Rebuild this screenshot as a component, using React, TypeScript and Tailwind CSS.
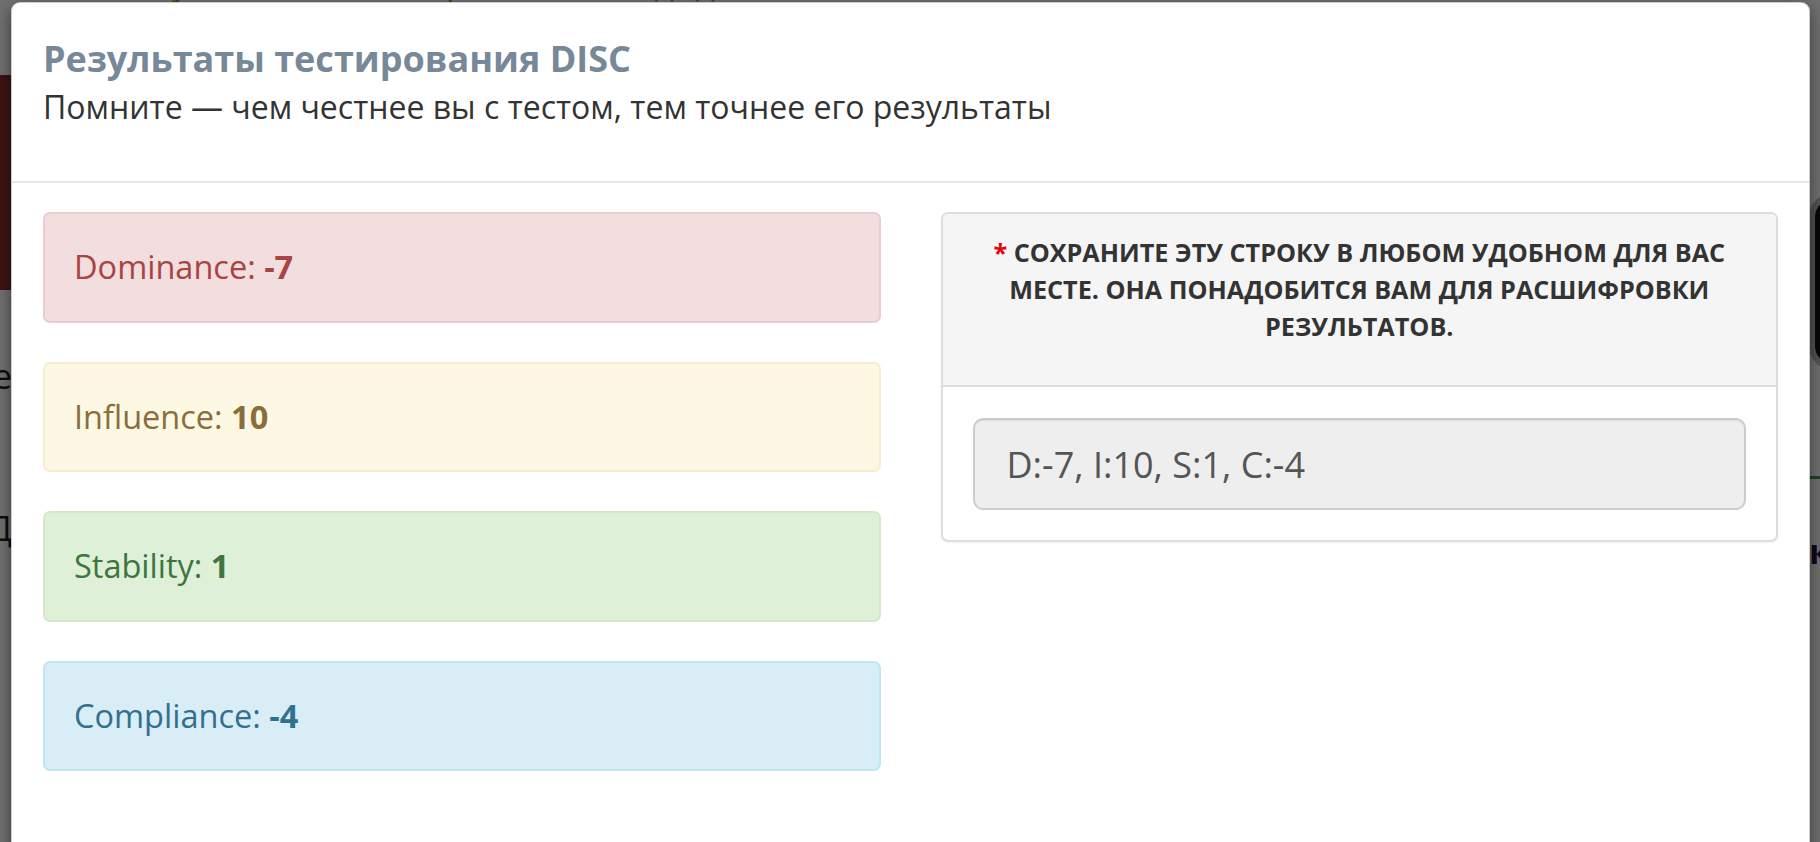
export default function App() {
  return (
    <div className="relative h-screen w-full overflow-hidden bg-white font-['Open_Sans',sans-serif]">
      {/* page behind the modal */}
      <div className="flex h-full">
        <div className="flex w-[12px] shrink-0 flex-col items-end">
          <div className="mt-[75px] h-[215px] w-[60px] shrink-0 bg-[#8a2f2f]" />
          <div className="mt-[66px] whitespace-nowrap text-[34px] leading-[40px] text-[#1c1c1c]">Резульнте</div>
          <div className="mt-[112px] whitespace-nowrap text-[34px] leading-[40px] text-[#1c1c1c]">ДД</div>
        </div>
        <div className="flex-1">
          <p className="mt-[-40px] pl-[139px] text-[34px] leading-[44px] text-[#d8862c]">публичного тестирования кандидатов.</p>
        </div>
        <div className="flex w-[11px] shrink-0 flex-col items-start">
          <div className="mt-[193px] h-[177px] w-[60px] shrink-0 rounded-l-[24px] border-[6px] border-[#bbb] bg-[#111]" />
          <div className="mt-[106px] h-[3px] w-[60px] shrink-0 bg-[#3f9c55]" />
          <div className="mt-[52px] whitespace-nowrap text-[34px] font-bold leading-[40px] text-[#2a1540]">кн</div>
        </div>
      </div>

      <div className="absolute inset-0 bg-[rgba(0,0,0,0.56)]" />

      {/* modal */}
      <div className="absolute bottom-[-40px] left-[11px] right-[10px] top-[2px] rounded-[9px] border border-black/20 bg-white shadow-[0_5px_15px_rgba(0,0,0,0.5)]">
        <div className="border-b-2 border-[#e5e5e5] px-[31px] pb-[51px] pt-[36px]">
          <h4 className="text-[36px] font-bold leading-[40px] text-[#778899]">Результаты тестирования DISC</h4>
          <p className="mt-[5px] text-[32px] leading-[46px] text-[#333]">
            Помните — чем честнее вы с тестом, тем точнее его результаты
          </p>
        </div>

        <div className="grid grid-cols-2 gap-x-[60px] px-[31px] pt-[29px]">
          <div className="flex flex-col gap-[39px]">
            <div className="rounded-[7px] border-2 border-[#ebccd1] bg-[#f2dede] px-[29px] py-[30px] text-[32.5px] leading-[46.5px] text-[#a94442]">
              Dominance: <b>-7</b>
            </div>
            <div className="rounded-[7px] border-2 border-[#faebcc] bg-[#fcf8e3] px-[29px] py-[30px] text-[32.5px] leading-[46.5px] text-[#8a6d3b]">
              Influence: <b>10</b>
            </div>
            <div className="rounded-[7px] border-2 border-[#d6e9c6] bg-[#dff0d8] px-[29px] py-[30px] text-[32.5px] leading-[46.5px] text-[#3c763d]">
              Stability: <b>1</b>
            </div>
            <div className="rounded-[7px] border-2 border-[#bce8f1] bg-[#d9edf7] px-[29px] py-[30px] text-[32.5px] leading-[46.5px] text-[#31708f]">
              Compliance: <b>-4</b>
            </div>
          </div>

          <div className="self-start overflow-hidden rounded-[7px] border-2 border-[#ddd] shadow-[0_1px_2px_rgba(0,0,0,0.05)]">
            <div className="border-b-2 border-[#ddd] bg-[#f5f5f5] px-[28px] pb-[40px] pt-[20px] text-center text-[25.2px] font-bold uppercase leading-[37px] text-[#333]">
              <span className="text-[#e8000b]">*</span> Сохраните эту строку в любом удобном для вас
              <br />
              месте. Она понадобится вам для расшифровки
              <br />
              результатов.
            </div>
            <div className="px-[30px] pb-[30px] pt-[31px]">
              <input
                readOnly
                value="D:-7, I:10, S:1, C:-4"
                className="h-[92px] w-full rounded-[10px] border-2 border-[#ccc] bg-[#eee] px-[32px] text-[36px] text-[#555] shadow-[inset_0_1px_1px_rgba(0,0,0,0.075)] outline-none"
              />
            </div>
          </div>
        </div>
      </div>
    </div>
  );
}
